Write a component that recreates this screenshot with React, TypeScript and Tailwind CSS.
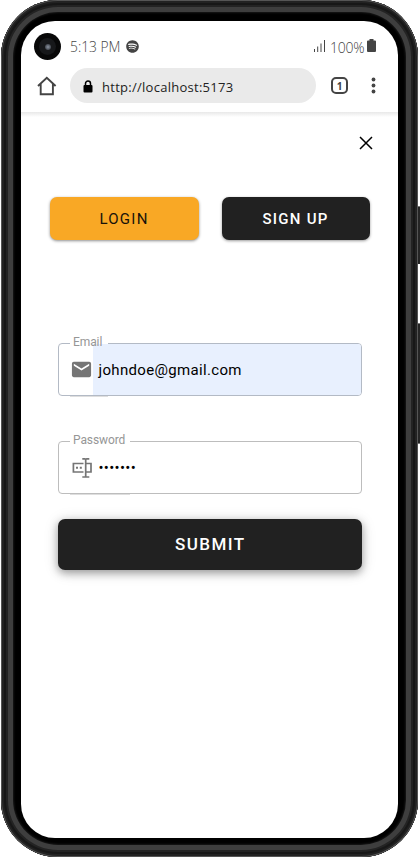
import React from "react";
import { FaSpotify } from "react-icons/fa";
import { MdEmail } from "react-icons/md";

function StatusBar() {
  return (
    <div className="flex h-[51px] items-center pl-[13px] pr-[22px] font-['Open_Sans',sans-serif] text-[14px] font-light text-[#444]">
      <div className="flex h-[27px] w-[27px] items-center justify-center rounded-full bg-[#080808]">
        <div className="flex h-[17px] w-[17px] items-center justify-center rounded-full bg-[#17181a]">
          <div className="h-[6px] w-[6px] rounded-full bg-[radial-gradient(#8b93a0,#24272c)]" />
        </div>
      </div>
      <span className="ml-[9px] mt-[2px] w-[56px] whitespace-nowrap text-[13.800px]">5:13 PM</span>
      <FaSpotify className="mb-px h-[13px] w-[13px]" />
      <svg className="mb-px ml-auto" width="12" height="13" viewBox="0 0 12 13" fill="#444">
        <path d="M0 9h1v3H0zM3.200 6.500h1V12h-1zM6.500 3.500h1V12h-1zM10 0h1v12h-1z" />
      </svg>
      <span className="ml-[4px] mt-[2px] w-[34px] whitespace-nowrap text-[14px] tracking-[-0.2px]">100%</span>
      <svg className="mb-[3px] ml-[3px]" width="9" height="13" viewBox="0 0 9 13" fill="#444">
        <path d="M2.500 0h4v1.500H8q1 0 1 1V12q0 1-1 1H1q-1 0-1-1V2.500q0-1 1-1h1.500z" />
      </svg>
    </div>
  );
}

function AddressBar() {
  return (
    <div className="flex h-[40px] items-start pl-[16px] pr-[22px] text-[#444]">
      <svg className="mt-[4px]" width="20" height="20" viewBox="0 0 20 20" fill="none" stroke="#444" strokeWidth="1.900">
        <path d="M1 10 9.800 1.700l8.800 8.300M3.700 8v10.200h12.200V8" />
      </svg>
      <div className="-mt-[4px] ml-[13px] flex h-[35px] w-[246px] items-center rounded-full bg-[#eaeaea] pl-[13px] font-['Open_Sans',sans-serif] text-[13px] tracking-[0.27px] text-[#222]">
        <svg className="mr-[9px] mt-[2px]" width="10" height="13" viewBox="0 0 10 13">
          <path d="M2.500 6V3.500a2.500 2.500 0 0 1 5 0V6" fill="none" stroke="black" strokeWidth="1.500" />
          <rect x="0.500" y="5" width="9" height="7.500" rx="1" fill="black" />
        </svg>
        <span className="mt-[4px]">http://localhost:5173</span>
      </div>
      <div className="ml-[15px] mt-[5px] flex h-[17px] w-[17px] items-center justify-center rounded-[5px] border-2 border-[#444] font-['Open_Sans',sans-serif] text-[10px] font-bold leading-none">1</div>
      <svg className="ml-auto mt-[5px]" width="5" height="17" viewBox="0 0 5 17" fill="#444">
        <circle cx="2.500" cy="2.500" r="1.900" /><circle cx="2.500" cy="8.500" r="1.900" /><circle cx="2.500" cy="14.500" r="1.900" />
      </svg>
    </div>
  );
}

function PasswordIcon() {
  return (
    <svg width="22" height="22" viewBox="0 0 22 22" fill="none" stroke="currentColor" strokeWidth="1.700">
      <path d="M12.500 6.500H2.400v8.500h10.100M14.700 2v18M11.300 1.800h2.400q1 0 1 1 0-1 1-1h2.600M11.300 20h2.400q1 0 1-1 0 1 1 1h2.600M14.700 6.500h5.300v8.500h-5.300" />
      <path d="M5 9.800h2v2H5zM8.800 9.800h2v2h-2z" fill="currentColor" stroke="none" />
    </svg>
  );
}

function Field({ label, icon, children, filled = false, legend }: { label: string; icon: React.ReactNode; children: React.ReactNode; filled?: boolean; legend: string }) {
  return (
    <div className={`relative flex h-[53px] w-[304.500px] items-center rounded-[4px] border pl-[12px] ${filled ? "border-[#b3bac5]" : "border-[#bdbdbd]"}`}>
      <div className="w-[22px] text-[#757575]">{icon}</div>
      <div className={`flex h-[51px] flex-1 items-center rounded-r-[3px] pl-[6px] pt-[2px] text-[15px] tracking-[0.33px] text-black ${filled ? "bg-[#e8f0fe]" : ""}`}>{children}</div>
      <span className={`absolute -top-px left-[11px] h-px bg-white ${legend}`} />
      <span className={`absolute -bottom-[2px] left-[11px] h-px bg-[#dedede] ${legend}`} />
      <span className="absolute -top-[9px] left-[14.500px] text-[12px] leading-[14px] tracking-[-0.1px] text-[#969696]">{label}</span>
    </div>
  );
}

export default function App() {
  return (
    <div className="relative h-[857px] w-[420px] overflow-hidden bg-white font-[Roboto,sans-serif]">
      <div className="absolute left-[415px] top-[206px] h-[58px] w-[5px] border-t border-[#777] bg-[#252525]" />
      <div className="absolute left-[415px] top-[323px] h-[121px] w-[5px] border-y border-[#777] bg-[#252525]" />
      <div className="relative ml-px h-[856.500px] w-[416.500px] rounded-[57px] bg-black pl-[20px] pt-[21px] shadow-[inset_0_0_0_1px_#555,inset_0_0_0_3px_#222,inset_0_0_0_5px_#171717,inset_0_0_0_7px_#232323,inset_0_0_0_12px_#3e3e3e,inset_0_0_2px_13px_#181818]">
        <div className="h-[817px] w-[377px] overflow-hidden rounded-[34px] bg-white">
          <StatusBar />
          <AddressBar />
          <div className="h-[5px] bg-gradient-to-b from-[#e8e8e8] to-white" />
          <div className="flex h-[79.500px] justify-end pr-[25.500px] pt-[19px]">
            <svg width="14" height="14" viewBox="0 0 14 14" stroke="black" strokeWidth="1.500">
              <path d="m1 1 12 12M13 1 1 13" />
            </svg>
          </div>
          <div className="flex gap-[23px] pl-[28.500px] text-[15px] tracking-[1.250px]">
            <button className="h-[43px] w-[149px] rounded-[7px] bg-[#f9a825] pt-[2px] text-[#17120a] shadow-[0_1px_3px_rgba(0,0,0,0.45)]">LOGIN</button>
            <button className="h-[43px] w-[148px] rounded-[7px] bg-[#212121] pt-[2px] font-medium text-white shadow-[0_1px_3px_rgba(0,0,0,0.4)]">SIGN UP</button>
          </div>
          <div className="flex flex-col pl-[36.500px] pt-[103.500px]">
            <Field label="Email" legend="w-[38px]" filled icon={<MdEmail className="-ml-px h-[23px] w-[23px]" />}>johndoe@gmail.com</Field>
            <div className="h-[45px]" />
            <Field label="Password" legend="w-[60px]" icon={<PasswordIcon />}><span className="tracking-[0.300px]">•••••••</span></Field>
            <button className="mt-[25px] h-[50.500px] w-[304.500px] rounded-[7px] bg-[#212121] pl-px text-[17px] font-medium tracking-[1.400px] text-white shadow-[0_3px_8px_rgba(0,0,0,0.35),0_2px_16px_rgba(0,0,0,0.12)]">SUBMIT</button>
          </div>
        </div>
      </div>
    </div>
  );
}
